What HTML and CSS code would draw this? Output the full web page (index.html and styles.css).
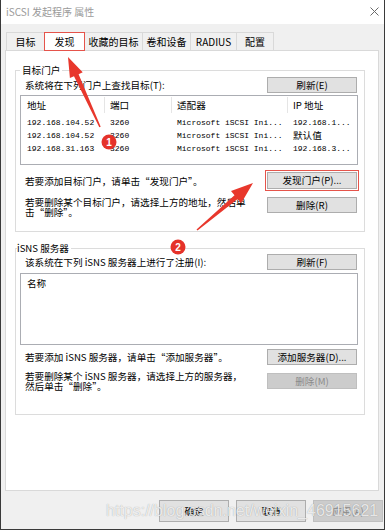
FILE: index.html
```
<!DOCTYPE html>
<html lang="zh-CN">
<head>
    <meta charset="UTF-8">
    <meta name="viewport" content="width=device-width, initial-scale=1.0">
    <title>iSCSI 发起程序 属性</title>
    <link rel="stylesheet" href="styles.css">
</head>
<body>
    <div class="window">
        <div class="titlebar">
            <span class="title">iSCSI 发起程序 属性</span>
            <svg class="close" width="9" height="9" viewBox="0 0 9 9"><path d="M0.5 0.5L8.5 8.5M8.5 0.5L0.5 8.5" stroke="#6a6a6a" stroke-width="1" fill="none"/></svg>
        </div>

        <div class="tabs">
            <div class="tab w1">目标</div>
            <div class="tab w2 active">发现</div>
            <div class="tab w3">收藏的目标</div>
            <div class="tab w4">卷和设备</div>
            <div class="tab w5">RADIUS</div>
            <div class="tab w6">配置</div>
        </div>

        <div class="panel">
            <!-- target portals -->
            <fieldset class="group first">
                <legend>目标门户</legend>
                <div class="row head-row">
                    <span class="label">系统将在下列门户上查找目标(T):</span>
                    <button class="btn">刷新(E)</button>
                </div>
                <div class="listview">
                    <div class="lv-head">
                        <div class="col">地址</div>
                        <div class="col">端口</div>
                        <div class="col">适配器</div>
                        <div class="col last">IP 地址</div>
                    </div>
                    <div class="lv-row">
                        <div class="cell">192.168.104.52</div>
                        <div class="cell">3260</div>
                        <div class="cell">Microsoft iSCSI Ini...</div>
                        <div class="cell">192.168.1...</div>
                    </div>
                    <div class="lv-row">
                        <div class="cell">192.168.104.52</div>
                        <div class="cell">3260</div>
                        <div class="cell">Microsoft iSCSI Ini...</div>
                        <div class="cell"><span class="cjk">默认值</span></div>
                    </div>
                    <div class="lv-row">
                        <div class="cell">192.168.31.163</div>
                        <div class="cell">3260</div>
                        <div class="cell">Microsoft iSCSI Ini...</div>
                        <div class="cell">192.168.3...</div>
                    </div>
                </div>
                <div class="row add-row">
                    <span class="label">若要添加目标门户，请单击“发现门户”。</span>
                    <button class="btn tall marked">发现门户(P)...</button>
                </div>
                <div class="row del-row">
                    <span class="label lines">若要删除某个目标门户，请选择上方的地址，然后单<br>击“删除”。</span>
                    <button class="btn">删除(R)</button>
                </div>
            </fieldset>

            <!-- iSNS servers -->
            <fieldset class="group second">
                <legend>iSNS 服务器</legend>
                <div class="row head-row">
                    <span class="label">该系统在下列 iSNS 服务器上进行了注册(I):</span>
                    <button class="btn">刷新(F)</button>
                </div>
                <div class="listbox">
                    <div class="item">名称</div>
                </div>
                <div class="row add-row">
                    <span class="label">若要添加 iSNS 服务器，请单击“添加服务器”。</span>
                    <button class="btn">添加服务器(D)...</button>
                </div>
                <div class="row del-row">
                    <span class="label lines up">若要删除某个 iSNS 服务器，请选择上方的服务器，<br>然后单击“删除”。</span>
                    <button class="btn" disabled>删除(M)</button>
                </div>
            </fieldset>
        </div>

        <div class="footer">
            <button class="btn big">确定</button>
            <button class="btn big">取消</button>
            <button class="btn big" disabled>应用(A)</button>
        </div>
    </div>

    <!-- red annotations drawn over the dialog -->
    <svg class="marks" width="385" height="530" viewBox="0 0 385 530">
        <polygon points="100.7,126.7 78.6,74.2 82.7,72.3 68,57 69.9,78.1 74,76.2 99.3,127.3" fill="#e8372c"/>
        <polygon points="197.5,230.6 237.7,199 241.2,203.2 253,183 231,191 234.5,195.2 196.5,229.4" fill="#e8372c"/>
        <circle cx="109" cy="142" r="7.5" fill="#e5322a"/>
        <text x="109" y="142" class="num">1</text>
        <circle cx="178" cy="247" r="7.5" fill="#e5322a"/>
        <text x="178" y="247" class="num">2</text>
    </svg>

    <div class="watermark">https://blog.csdn.net/weixin_46915621</div>
</body>
</html>
```

FILE: styles.css
```
body {
    margin: 0;
    padding: 0;
    font-family: "Noto Sans CJK SC", sans-serif;
    font-size: 9.6px;
    color: #000;
    background-color: #fff;
}
.window {
    width: 385px;
    height: 530px;
    box-sizing: border-box;
    border: 1px solid #3a3a3a;
    border-top: none;
    background-color: #f0f0f0;
}
.titlebar {
    height: 24px;
    background-color: #fff;
    display: flex;
    align-items: center;
    justify-content: space-between;
    padding: 0 5px 1px 5px;
    box-sizing: border-box;
}
.title {
    font-size: 10px;
    color: #9a9a9a;
}
.tabs {
    display: flex;
    align-items: flex-end;
    height: 18px;
    margin-top: 8px;
    padding-left: 5px;
}
.tab {
    height: 18px;
    box-sizing: border-box;
    border: 1px solid #d9d9d9;
    border-bottom: none;
    margin-right: -1px;
    font-size: 10px;
    line-height: 17px;
    text-align: center;
    background-color: #f0f0f0;
}
.tab.active {
    position: relative;
    z-index: 1;
    height: 19px;
    margin-bottom: -1px;
    background-color: #fff;
    outline: 1px solid #e5544b;
    outline-offset: -1px;
}
.w1 { width: 39px; }
.w2 { width: 41px; }
.w3 { width: 59px; }
.w4 { width: 49px; }
.w5 { width: 47px; }
.w6 { width: 38px; }
.panel {
    width: 374px;
    height: 441px;
    box-sizing: border-box;
    margin-left: 4px;
    border: 1px solid #d9d9d9;
    background-color: #fff;
    padding-left: 9px;
    padding-top: 1px;
}
.group {
    width: 350px;
    box-sizing: border-box;
    margin: 12px 0 0 0;
    padding: 0 6px 14px 4px;
    border: 1px solid #dcdcdc;
    min-width: 0;
}
.group.second {
    margin-top: 10px;
    padding-bottom: 23px;
}
.group legend {
    padding: 0 2px;
    line-height: 12px;
    font-size: 9.6px;
}
.group.second legend {
    margin-left: -3px;
    padding: 0 2px 0 0;
}
.row {
    display: flex;
    justify-content: space-between;
    align-items: center;
}
.label {
    margin-left: 5px;
    white-space: nowrap;
}
.head-row {
    height: 16px;
    margin-top: 1px;
}
.second .head-row {
    margin-top: 0;
}
.add-row {
    margin-top: 7px;
}
.second .add-row {
    margin-top: 4px;
}
.del-row {
    margin-top: 8px;
    align-items: flex-start;
}
.label.lines {
    line-height: 10px;
}
.label.up {
    margin-top: -2px;
}
.btn {
    width: 90px;
    height: 16px;
    box-sizing: border-box;
    margin-right: 1px;
    padding: 0;
    border: 1px solid #adadad;
    background-color: #e1e1e1;
    font-family: "Noto Sans CJK SC", sans-serif;
    font-size: 9.6px;
    line-height: 13px;
    color: #000;
}
.btn.tall {
    height: 17px;
}
.btn.marked {
    outline: 1px solid #e5544b;
    outline-offset: 1px;
}
.btn:disabled {
    background-color: #cccccc;
    border-color: #bfbfbf;
    color: #8a8a8a;
}
.listview {
    margin-top: 2px;
    height: 70px;
    box-sizing: border-box;
    border: 1px solid #abadb3;
    background-color: #fff;
}
.lv-head, .lv-row {
    display: grid;
    grid-template-columns: 84px 67px 116px 1fr;
}
.lv-head {
    height: 20px;
    line-height: 20px;
}
.lv-head .col {
    padding-left: 5px;
    border-right: 1px solid #e5e5e5;
    margin: 1px 0 3px 0;
    line-height: 16px;
}
.lv-head .col:first-child {
    padding-left: 6px;
}
.lv-head .col.last {
    border-right: none;
}
.lv-row {
    height: 13px;
    line-height: 13px;
    font-family: "Liberation Mono", "Noto Sans CJK SC", monospace;
    font-size: 8px;
}
.lv-row .cell {
    padding-left: 5px;
    white-space: nowrap;
}
.lv-row .cell:first-child {
    padding-left: 6px;
}
.cjk {
    font-family: "Noto Sans CJK SC", sans-serif;
    font-size: 9.6px;
}
.listbox {
    margin-top: 3px;
    height: 72px;
    box-sizing: border-box;
    border: 1px solid #abadb3;
    background-color: #fff;
    padding: 3px 6px;
}
.listbox .item {
    line-height: 12px;
}
.footer {
    display: flex;
    justify-content: flex-end;
    gap: 7px;
    margin-top: 9px;
    padding-right: 1px;
}
.btn.big {
    width: 70px;
    height: 22px;
    margin-right: 0;
    font-size: 9.6px;
}
.marks {
    position: absolute;
    top: 0;
    left: 0;
    pointer-events: none;
}
.num {
    fill: #fff;
    font-family: "Liberation Sans", sans-serif;
    font-size: 10px;
    font-weight: bold;
    text-anchor: middle;
    dominant-baseline: central;
}
.watermark {
    position: absolute;
    left: 106px;
    top: 503px;
    font-family: "Liberation Sans", Arial, sans-serif;
    font-size: 16px;
    line-height: 16px;
    color: rgba(255, 255, 255, 0.8);
    text-shadow: 0 0 1px rgba(0, 0, 0, 0.35);
    pointer-events: none;
}
```
